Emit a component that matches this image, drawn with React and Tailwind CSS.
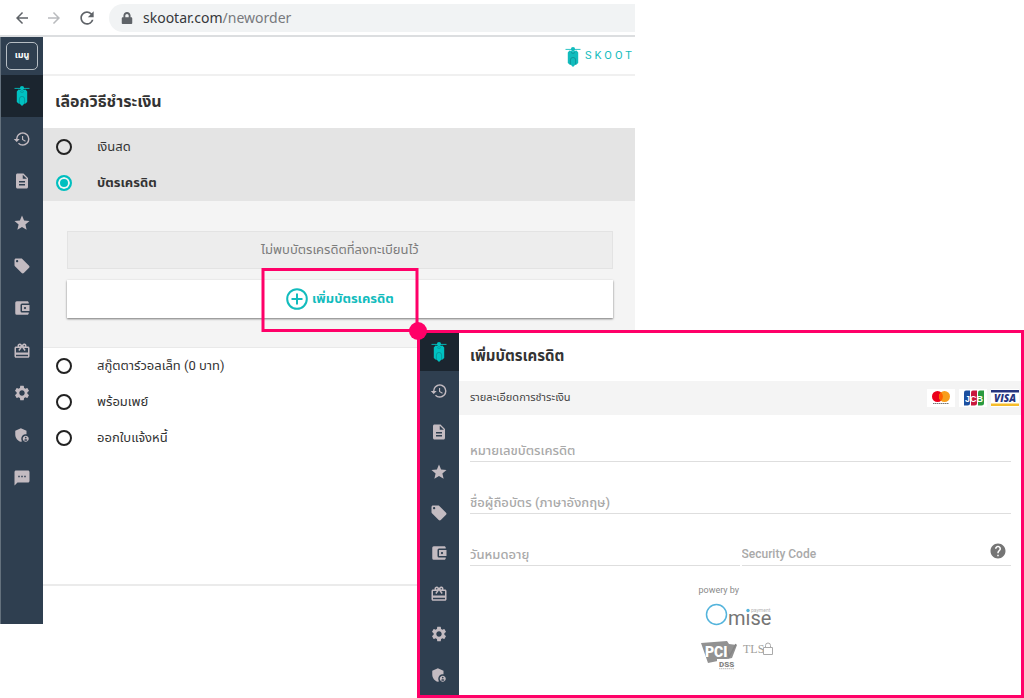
import React from 'react';
import { FaLock } from 'react-icons/fa';
import {
  MdAccountBalanceWallet,
  MdAdminPanelSettings,
  MdArrowBack,
  MdArrowForward,
  MdCardGiftcard,
  MdDescription,
  MdGrade,
  MdHelp,
  MdHistory,
  MdLocalOffer,
  MdRefresh,
  MdSettings,
  MdTextsms,
} from 'react-icons/md';

function ScooterIcon({ className }) {
  return (
    <svg viewBox="0 0 16 20" className={className} fill="currentColor" aria-hidden="true">
      <circle cx="8" cy="2.200" r="2.100" />
      <path d="M.5 1.900h15v.9H.5z" />
      <path d="M4.500 3.600 8 4.300l3.500-.7 1.700 1.900V16l-2 1.800H4.800L2.800 16V5.500z" />
      <path d="M6 12.500h4V18l-2 2-2-2z" />
      <path
        d="M5.400 17.800V13a2.600 2.600 0 0 1 5.200 0v4.800M6 5.500l2 1 2-1"
        fill="none"
        stroke="#0b5f66"
        strokeOpacity=".55"
        strokeWidth=".7"
      />
    </svg>
  );
}

const NAV = [
  { label: 'New order', Icon: ScooterIcon },
  { label: 'History', Icon: MdHistory },
  { label: 'Documents', Icon: MdDescription },
  { label: 'Favourites', Icon: MdGrade },
  { label: 'Promotions', Icon: MdLocalOffer },
  { label: 'Wallet', Icon: MdAccountBalanceWallet },
  { label: 'Rewards', Icon: MdCardGiftcard },
  { label: 'Settings', Icon: MdSettings },
  { label: 'Privacy', Icon: MdAdminPanelSettings },
  { label: 'Messages', Icon: MdTextsms },
];

function NavItem({ item, active, className }) {
  const { Icon, label } = item;
  return (
    <a
      href="#"
      aria-label={label}
      className={`flex items-center justify-center ${active ? 'bg-[#1b252f] text-[#00c1c1]' : 'text-[#c3bbc1]'} ${className}`}
    >
      <Icon className={active ? 'h-5 w-4' : 'size-[18px]'} />
    </a>
  );
}

function PaymentOption({ id, label, checked, onChange }) {
  return (
    <label
      htmlFor={id}
      className={`flex h-9 items-center gap-[25px] px-[13px] text-[13px] text-[#333] ${checked ? 'font-bold' : ''}`}
    >
      <input
        id={id}
        type="radio"
        name="payment"
        checked={checked}
        onChange={() => onChange(id)}
        className="size-4 shrink-0 appearance-none rounded-full border-2 border-[#222] checked:border-[#00bfbf] checked:bg-[#00bfbf] checked:shadow-[inset_0_0_0_2px_#f0f5f5]"
      />
      {label}
    </label>
  );
}

function BrowserBar() {
  return (
    <div className="flex h-[37px] items-center border-b-2 border-[#dcdee0] pl-[13px] text-[#5f6368]">
      <button type="button" aria-label="Back">
        <MdArrowBack className="size-[18px]" />
      </button>
      <button type="button" aria-label="Forward" className="ml-[14px] text-[#b9bbbe]">
        <MdArrowForward className="size-[18px]" />
      </button>
      <button type="button" aria-label="Reload" className="ml-[14px]">
        <MdRefresh className="size-5" />
      </button>
      <div className="ml-3 flex h-7 min-w-0 flex-1 items-center gap-[10px] rounded-l-full bg-[#f1f3f4] pl-3">
        <FaLock className="size-3 shrink-0" />
        <p className="font-['Noto_Sans',sans-serif] text-[14px] text-[#77797d]">
          <span className="text-[#36383b]">skootar.com</span>/neworder
        </p>
      </div>
    </div>
  );
}

function OrderWindow() {
  const [selected, setSelected] = React.useState('credit');
  return (
    <section className="w-[62%]">
      <BrowserBar />
      <div className="flex min-h-[587px]">
        <nav className="w-[43px] shrink-0 border-l border-[#64717d] bg-[#2f3f50]">
          <div className="flex h-[38px] items-center justify-center">
            <button
              type="button"
              className="h-7 w-8 rounded-[5px] border border-[#b7bec4] text-[9px] font-bold text-white"
            >
              เมนู
            </button>
          </div>
          <div className="flex h-[424px] flex-col">
            {NAV.map((item, i) => (
              <NavItem key={item.label} item={item} active={i === 0} className="flex-1" />
            ))}
          </div>
        </nav>
        <main className="flex min-w-0 flex-1 flex-col">
          <header className="flex h-[39px] items-center justify-end border-b-2 border-[#f0f0f0] pt-[2px]">
            <div className="flex items-center gap-1 text-[#12bcbd]">
              <ScooterIcon className="h-5 w-4 shrink-0" />
              <span className="font-[Roboto,sans-serif] text-[11px] tracking-[3px]">SKOOT</span>
            </div>
          </header>
          <h1 className="flex h-[52px] items-center px-3 text-[16px] font-bold text-[#333]">
            เลือกวิธีชำระเงิน
          </h1>
          <div className="bg-[#e4e4e4] pt-px">
            <PaymentOption id="cash" label="เงินสด" checked={selected === 'cash'} onChange={setSelected} />
            <PaymentOption id="credit" label="บัตรเครดิต" checked={selected === 'credit'} onChange={setSelected} />
          </div>
          <div className="flex flex-col gap-[11px] border-b border-[#e9e9e9] bg-[#f4f4f4] pt-[30px] pr-[22px] pb-[29px] pl-6">
            <p className="flex h-[38px] items-center justify-center border border-[#e3e3e3] bg-[#ededed] text-[13px] text-[#7b7b7b]">
              ไม่พบบัตรเครดิตที่ลงทะเบียนไว้
            </p>
            <div className="relative">
              <button
                type="button"
                className="flex h-[38px] w-full items-center justify-center gap-1 bg-white text-[13px] font-bold text-[#12bcbd] shadow-[0_1px_2px_#777]"
              >
                <svg viewBox="0 0 22 22" className="size-[22px]" fill="none" stroke="currentColor" strokeWidth="2">
                  <circle cx="11" cy="11" r="9.800" />
                  <path d="M11 5.500v11M5.500 11h11" />
                </svg>
                เพิ่มบัตรเครดิต
              </button>
              <div className="pointer-events-none absolute -top-3 left-1/2 h-16 w-[157px] -translate-x-1/2 border-3 border-[#ff0068]" />
            </div>
          </div>
          <div className="flex-1">
            <PaymentOption id="wallet" label="สกู๊ตตาร์วอลเล็ท (0 บาท)" checked={selected === 'wallet'} onChange={setSelected} />
            <PaymentOption id="promptpay" label="พร้อมเพย์" checked={selected === 'promptpay'} onChange={setSelected} />
            <PaymentOption id="invoice" label="ออกใบแจ้งหนี้" checked={selected === 'invoice'} onChange={setSelected} />
          </div>
          <footer className="h-10 border-t-2 border-[#ebebeb]" />
        </main>
      </div>
    </section>
  );
}

function CardBrands() {
  return (
    <div className="flex items-center gap-1">
      <svg viewBox="0 0 28 18" className="h-[18px] w-7" role="img" aria-label="Mastercard">
        <path fill="#fff" d="M0 0h28v18H0z" />
        <circle cx="10.500" cy="7.500" r="5.500" fill="#eb001b" />
        <circle cx="17.500" cy="7.500" r="5.500" fill="#f79e1b" />
        <path d="M14 3.300a5.500 5.500 0 0 1 0 8.400 5.500 5.500 0 0 1 0-8.400" fill="#ff5f00" />
        <path d="M6 14.500h16" stroke="#777" strokeWidth="1" strokeDasharray="1.500 .5" />
      </svg>
      <svg viewBox="0 0 28 18" className="h-[18px] w-7" role="img" aria-label="JCB">
        <path fill="#fff" d="M0 0h28v18H0z" />
        <path fill="#1b4fa0" d="M7 1.500h4V14a2.500 2.500 0 0 1-2.500 2.500H5v-13a2 2 0 0 1 2-2" />
        <path fill="#c9183c" d="M14 1.500h4V14a2.500 2.500 0 0 1-2.500 2.500H12v-13a2 2 0 0 1 2-2" />
        <path fill="#2a9a3f" d="M21 1.500h4V14a2.500 2.500 0 0 1-2.500 2.500H19v-13a2 2 0 0 1 2-2" />
        <text x="15" y="12.500" textAnchor="middle" fill="#fff" fontSize="9" fontWeight="700" fontFamily="Liberation Sans">
          JCB
        </text>
      </svg>
      <svg viewBox="0 0 28 18" className="h-[18px] w-7" role="img" aria-label="Visa">
        <path fill="#fff" d="M0 0h28v18H0z" />
        <path fill="#26347f" d="M0 1h28v2.500H0z" />
        <path fill="#f6bd2b" d="M0 14.500h28V17H0z" />
        <text x="14" y="12.500" textAnchor="middle" fill="#26347f" fontSize="10" fontWeight="800" fontStyle="italic" fontFamily="Open Sans">
          VISA
        </text>
      </svg>
    </div>
  );
}

function Field({ id, label, className = 'text-[13px]', children }) {
  return (
    <div className="flex h-[52px] items-end border-b border-[#dedede]">
      <input
        id={id}
        aria-label={label}
        placeholder={label}
        className={`h-[22px] w-full min-w-0 bg-transparent font-medium outline-none placeholder:text-[#a9a9a9] ${className}`}
      />
      {children}
    </div>
  );
}

function PaymentBadges() {
  return (
    <div className="mx-auto mt-[18px] w-[84px] font-[Roboto,sans-serif] text-[#8a8a8a]">
      <p className="text-[9px] leading-3">powery by</p>
      <svg viewBox="0 0 84 28" className="mt-[6px] h-7 w-[84px]" role="img" aria-label="Omise payment">
        <circle cx="17.500" cy="12.500" r="10" fill="none" stroke="#54b4dc" strokeWidth="1.500" />
        <text x="29" y="22.500" fill="#757575" fontSize="20" fontWeight="400" fontFamily="Roboto">
          mise
        </text>
        <path d="M45 4.500h8v6h-8z" fill="#fff" />
        <circle cx="49" cy="8.500" r="1.700" fill="#54b4dc" />
        <text x="52" y="9.500" fill="#b5b5b5" fontSize="5" fontFamily="Roboto">
          payment
        </text>
      </svg>
      <svg viewBox="0 0 84 32" className="mt-2 h-8 w-[84px]" role="img" aria-label="PCI DSS, TLS">
        <path fill="#929292" d="m2 5 26-2 2 3 8 1-5 13-24 5z" />
        <path d="m27 8 3 11 7-13" fill="none" stroke="#858585" strokeWidth="1.500" />
        <text x="6" y="19" fill="#fff" fontSize="14" fontWeight="900" fontFamily="Roboto">
          PCI
        </text>
        <path d="M18 21h18v9H18z" fill="#fff" />
        <text x="20" y="29" fill="#858585" fontSize="8" fontWeight="900" fontFamily="Roboto">
          DSS
        </text>
        <path d="M20 30.700h15" stroke="#aaa" strokeWidth=".8" strokeDasharray="1.500 .5" />
        <text x="44" y="15" fill="#a19f9c" fontSize="12" fontFamily="Liberation Serif">
          TLS
        </text>
        <path d="M64.500 9.500h9v7h-9zM66.500 9.500v-2a2.500 2.500 0 0 1 5 0v2" fill="#fff" stroke="#aaa" />
      </svg>
    </div>
  );
}

function AddCardPanel() {
  return (
    <section className="absolute top-[330px] right-0 bottom-0 left-[417px] flex border-3 border-[#ff0068] bg-white">
      <span className="absolute -top-[11px] -left-[11px] size-[18px] rounded-full bg-[#ff0068]" />
      <nav className="flex w-[39px] shrink-0 flex-col bg-[#2f3f50]">
        {NAV.slice(0, 9).map((item, i) => (
          <NavItem
            key={item.label}
            item={item}
            active={i === 0}
            className={i === 0 ? 'h-[38px] pr-px' : 'flex-1 pr-px'}
          />
        ))}
      </nav>
      <div className="min-w-0 flex-1">
        <h2 className="flex h-[46px] items-center px-[11px] text-[15px] font-bold text-[#333]">เพิ่มบัตรเครดิต</h2>
        <div className="mt-[2px] flex h-[34px] items-center justify-between bg-[#f4f4f4] pr-[2px] pl-[11px] text-[11px] text-[#444]">
          รายละเอียดการชำระเงิน
          <CardBrands />
        </div>
        <form className="-mt-[5px] pr-[10px] pl-[11px]">
          <Field id="number" label="หมายเลขบัตรเครดิต" />
          <Field id="holder" label="ชื่อผู้ถือบัตร (ภาษาอังกฤษ)" />
          <div className="grid grid-cols-2 gap-[2px]">
            <Field id="expiry" label="วันหมดอายุ" />
            <Field id="code" label="Security Code" className="text-[12px]">
              <button type="button" aria-label="Help" className="mr-1 mb-[5px] text-[#757575]">
                <MdHelp className="size-[18px]" />
              </button>
            </Field>
          </div>
          <PaymentBadges />
        </form>
      </div>
    </section>
  );
}

export default function App() {
  return (
    <div className="relative min-h-screen overflow-hidden bg-white font-[Roboto,'Noto_Sans_Thai',sans-serif]">
      <OrderWindow />
      <AddCardPanel />
    </div>
  );
}
